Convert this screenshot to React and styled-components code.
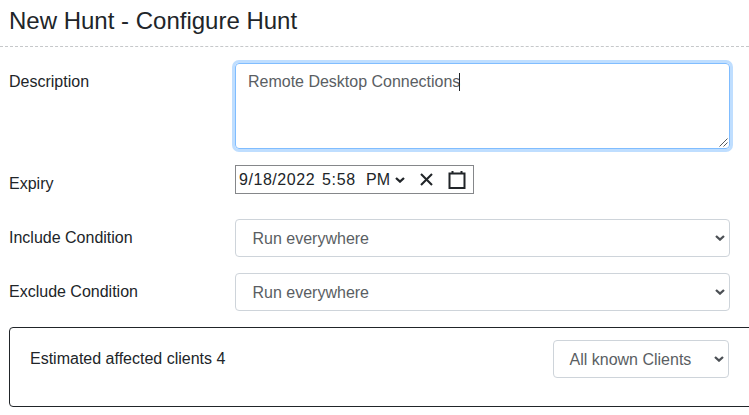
import React from "react";
import styled, { createGlobalStyle } from "styled-components";

const GlobalStyle = createGlobalStyle`
  * { box-sizing: border-box; }
  body {
    margin: 0;
    background: #fff;
    color: #212529;
    font: 16px/24px "Liberation Sans", Arial, sans-serif;
    overflow: hidden;
  }
`;

const Page = styled.main`
  width: 749px;
  height: 415px;
  overflow: hidden;
`;

const Header = styled.header`
  height: 47px;
  padding: 3px 9px 0;
  border-bottom: 1px dashed #c6c8ca;
`;

const Title = styled.h1`
  margin: 0;
  font-size: 24px;
  font-weight: 400;
  line-height: 36px;
  white-space: nowrap;
`;

const Form = styled.div`
  padding: 16px 0 0 9px;
`;

const Row = styled.div`
  display: grid;
  grid-template-columns: 226px 495px;
  height: ${(p) => p.$height}px;
  margin-bottom: 16px;
`;

const Label = styled.label`
  padding-top: 7px;
  white-space: nowrap;
`;

const DescriptionBox = styled.div`
  display: flex;
  justify-content: space-between;
  height: 86px;
  padding: 6px 1px 1px 12px;
  border: 1px solid #80bdff;
  border-radius: 4px;
  box-shadow: 0 0 0 3px #bfdeff;
  color: #5a5e63;
`;

const Typed = styled.span`
  display: flex;
  align-items: center;
  height: 24px;
  letter-spacing: -0.01px;
  white-space: nowrap;
`;

const Caret = styled.i`
  width: 1px;
  height: 18px;
  margin-left: -1px;
  background: #212529;
`;

const Grip = styled.svg`
  align-self: flex-end;
  width: 9px;
  height: 9px;
`;

const DateField = styled.div`
  display: flex;
  align-items: center;
  width: 239px;
  height: 29px;
  padding-left: 3px;
  border: 1px solid #85878a;
  white-space: nowrap;
`;

const DatePart = styled.span`
  width: ${(p) => p.$width}px;
  letter-spacing: ${(p) => p.$spacing || 0}px;
`;

const Chevron = styled.svg`
  flex: none;
  width: 10px;
  height: 6px;
`;

const DateIcon = styled.svg`
  width: ${(p) => p.$size}px;
  height: ${(p) => p.$size}px;
  margin-left: ${(p) => p.$gap}px;
`;

const SelectBox = styled.div`
  display: flex;
  align-items: center;
  justify-content: space-between;
  width: ${(p) => p.$width || 495}px;
  height: 38px;
  padding: 0 4px 0 ${(p) => (p.$width ? 15.5 : 16.5)}px;
  border: 1px solid #ced4da;
  border-radius: 4px;
  color: #5a5e63;
  white-space: nowrap;
`;

const SelectValue = styled.span`
  padding-top: 2px;
`;

const Estimate = styled.section`
  display: flex;
  justify-content: space-between;
  width: 760px;
  height: 80px;
  padding: 12px 39px 0 20px;
  border: 1px solid #212529;
  border-radius: 4px;
`;

const EstimateText = styled.span`
  padding-top: 7px;
`;

function Arrow({ color = "#4c5055" }) {
  return (
    <Chevron viewBox="0 0 10 6">
      <path d="M1 1L5 4.6L9 1" fill="none" stroke={color} strokeWidth="2.3" />
    </Chevron>
  );
}

function Select({ children, width }) {
  return (
    <SelectBox $width={width} role="combobox">
      <SelectValue>{children}</SelectValue>
      <Arrow />
    </SelectBox>
  );
}

export default function App() {
  return (
    <Page>
      <GlobalStyle />
      <Header>
        <Title>New Hunt - Configure Hunt</Title>
      </Header>
      <Form>
        <Row $height={86}>
          <Label>Description</Label>
          <DescriptionBox>
            <Typed>
              Remote Desktop Connections
              <Caret />
            </Typed>
            <Grip viewBox="0 0 9 9">
              <path d="M0.5 8.5L8.5 0.5M4.5 8.5L8.5 4.5" stroke="#55595e" />
            </Grip>
          </DescriptionBox>
        </Row>
        <Row $height={38}>
          <Label>Expiry</Label>
          <DateField>
            <DatePart $width={83} $spacing={0.55}>9/18/2022</DatePart>
            <DatePart $width={44} $spacing={0.7}>5:58</DatePart>
            <DatePart $width={29}>PM</DatePart>
            <Arrow color="#212529" />
            <DateIcon $size={13} $gap={15} viewBox="0 0 13 13">
              <path d="M1 1L12 12M12 1L1 12" stroke="#212529" strokeWidth="2.1" />
            </DateIcon>
            <DateIcon $size={18} $gap={15} viewBox="0 0 18 18">
              <path d="M1.5 2.5H16.5V17H1.5ZM4.5 0V3M13.5 0V3" fill="none" stroke="#212529" strokeWidth="2" />
            </DateIcon>
          </DateField>
        </Row>
        <Row $height={38}>
          <Label>Include Condition</Label>
          <Select>Run everywhere</Select>
        </Row>
        <Row $height={38}>
          <Label>Exclude Condition</Label>
          <Select>Run everywhere</Select>
        </Row>
        <Estimate>
          <EstimateText>Estimated affected clients 4</EstimateText>
          <Select width={176}>All known Clients</Select>
        </Estimate>
      </Form>
    </Page>
  );
}
